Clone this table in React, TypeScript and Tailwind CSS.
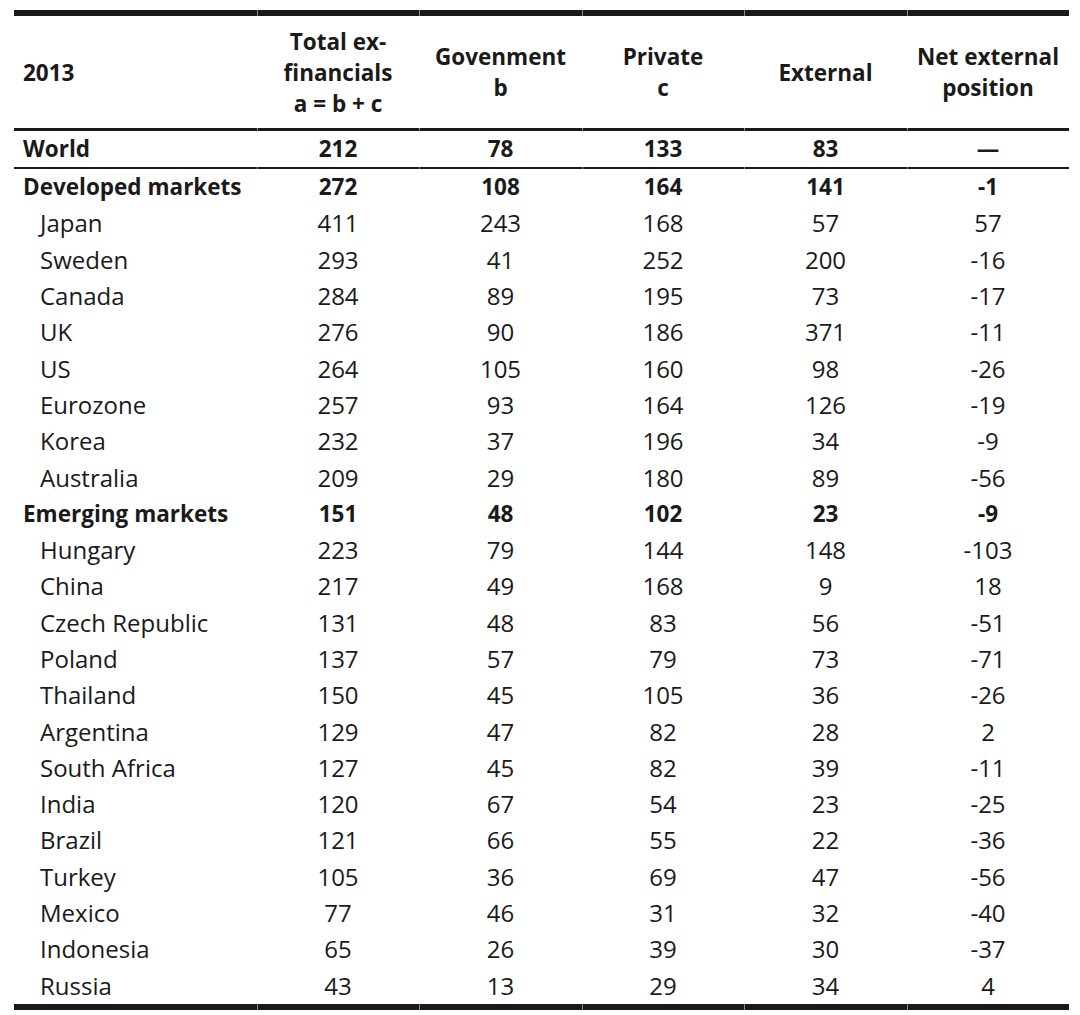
const COLS = ["w-[243px]", "w-[162px]", "w-[163px]", "w-[162px]", "w-[163px]", "w-[162px]"];

type Row = { name: string; vals: string[]; bold?: boolean };

const developed: Row[] = [
  { name: "Developed markets", vals: ["272", "108", "164", "141", "-1"], bold: true },
  { name: "Japan", vals: ["411", "243", "168", "57", "57"] },
  { name: "Sweden", vals: ["293", "41", "252", "200", "-16"] },
  { name: "Canada", vals: ["284", "89", "195", "73", "-17"] },
  { name: "UK", vals: ["276", "90", "186", "371", "-11"] },
  { name: "US", vals: ["264", "105", "160", "98", "-26"] },
  { name: "Eurozone", vals: ["257", "93", "164", "126", "-19"] },
  { name: "Korea", vals: ["232", "37", "196", "34", "-9"] },
  { name: "Australia", vals: ["209", "29", "180", "89", "-56"] },
  { name: "Emerging markets", vals: ["151", "48", "102", "23", "-9"], bold: true },
  { name: "Hungary", vals: ["223", "79", "144", "148", "-103"] },
  { name: "China", vals: ["217", "49", "168", "9", "18"] },
  { name: "Czech Republic", vals: ["131", "48", "83", "56", "-51"] },
  { name: "Poland", vals: ["137", "57", "79", "73", "-71"] },
  { name: "Thailand", vals: ["150", "45", "105", "36", "-26"] },
  { name: "Argentina", vals: ["129", "47", "82", "28", "2"] },
  { name: "South Africa", vals: ["127", "45", "82", "39", "-11"] },
  { name: "India", vals: ["120", "67", "54", "23", "-25"] },
  { name: "Brazil", vals: ["121", "66", "55", "22", "-36"] },
  { name: "Turkey", vals: ["105", "36", "69", "47", "-56"] },
  { name: "Mexico", vals: ["77", "46", "31", "32", "-40"] },
  { name: "Indonesia", vals: ["65", "26", "39", "30", "-37"] },
  { name: "Russia", vals: ["43", "13", "29", "34", "4"] },
];

function Rule({ h }: { h: string }) {
  return (
    <div className="flex">
      {COLS.map((w, i) => (
        <div key={i} className={`${w} ${h} flex`}>
          <div className={`flex-1 bg-[#1a1a1a] ${i > 0 ? "border-l border-[#8a8a8a]" : ""}`} />
        </div>
      ))}
    </div>
  );
}

function DataRow({ row, h = "h-[36.3px]" }: { row: Row; h?: string }) {
  const weight = row.bold ? "font-bold text-[22.5px]" : "font-normal text-[24px]";
  return (
    <div className={`flex items-center ${h}`}>
      <div className={`${COLS[0]} ${row.bold ? "pl-[9px]" : "pl-[26px]"} ${weight} whitespace-nowrap`}>{row.name}</div>
      {row.vals.map((v, i) => (
        <div key={i} className={`${COLS[i + 1]} text-center ${weight}`}>
          {v}
        </div>
      ))}
    </div>
  );
}

export default function App() {
  const head = [
    ["Total ex-", "financials", "a = b + c"],
    ["Govenment", "b"],
    ["Private", "c"],
    ["External"],
    ["Net external", "position"],
  ];
  return (
    <div
      className="w-[1080px] h-[1015px] bg-white pt-[10px] pl-[14px] text-[#1a1a1a]"
      style={{ fontFamily: '"Open Sans", "Noto Sans", sans-serif' }}
    >
      <Rule h="h-[6px]" />
      <div className="flex items-center h-[112px] font-bold text-[22.5px] leading-[31px]">
        <div className={`${COLS[0]} pl-[9px]`}>2013</div>
        {head.map((lines, i) => (
          <div key={i} className={`${COLS[i + 1]} flex flex-col items-center`}>
            {lines.map((l) => (
              <div key={l} className="whitespace-nowrap">{l}</div>
            ))}
          </div>
        ))}
      </div>
      <Rule h="h-[3px]" />
      <DataRow row={{ name: "World", vals: ["212", "78", "133", "83", "—"], bold: true }} h="h-[36px]" />
      <Rule h="h-[2px]" />
      {developed.map((r) => (
        <DataRow key={r.name} row={r} />
      ))}
      <Rule h="h-[6px]" />
    </div>
  );
}
